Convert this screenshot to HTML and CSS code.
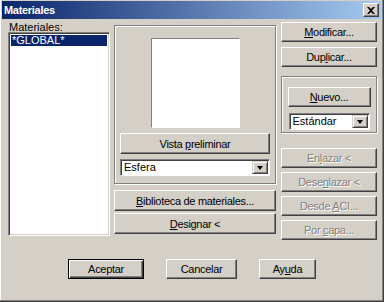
FILE: index.html
```html
<!DOCTYPE html>
<html lang="es">
<head>
  <meta charset="UTF-8">
  <title>Materiales</title>
  <link rel="stylesheet" href="styles.css">
</head>
<body>

  <div class="window">
    <div class="titlebar">
      <span class="title">Materiales</span>
      <button class="close-btn">
        <svg width="8" height="7" viewBox="0 0 8 7"><path d="M0 0h2l2 2 2-2h2L5 3.5 8 7H6L4 5 2 7H0l3-3.5z" fill="#000"/></svg>
      </button>
    </div>

    <div class="content">
      <!-- Lista de materiales -->
      <div class="col-list">
        <label class="lbl">Materiales:</label>
        <div class="listbox">
          <div class="item selected">*GLOBAL*</div>
        </div>
      </div>

      <!-- Vista previa -->
      <div class="col-mid">
        <div class="group preview-group">
          <div class="preview"></div>
          <button class="btn btn-vista">Vista <u>p</u>reliminar</button>
          <div class="combo combo-esfera">
            <span class="combo-text">Esfera</span>
            <span class="combo-arrow"></span>
          </div>
        </div>
        <button class="btn btn-wide btn-biblio"><u>B</u>iblioteca de materiales...</button>
        <button class="btn btn-wide btn-designar"><u>D</u>esignar &lt;</button>
      </div>

      <!-- Acciones -->
      <div class="col-right">
        <button class="btn btn-side btn-mod"><u>M</u>odificar...</button>
        <button class="btn btn-side btn-dup">Dup<u>l</u>icar...</button>
        <div class="group new-group">
          <button class="btn btn-nuevo"><u>N</u>uevo...</button>
          <div class="combo combo-tipo">
            <span class="combo-text">Estándar</span>
            <span class="combo-arrow"></span>
          </div>
        </div>
        <button class="btn btn-side disabled btn-enlazar">En<u>l</u>azar &lt;</button>
        <button class="btn btn-side disabled btn-gap">Dese<u>n</u>lazar &lt;</button>
        <button class="btn btn-side disabled btn-gap">Desde <u>A</u>CI...</button>
        <button class="btn btn-side disabled btn-gap">Por <u>c</u>apa...</button>
      </div>
    </div>

    <div class="footer">
      <button class="btn default btn-aceptar">Aceptar</button>
      <button class="btn btn-cancelar">Cancelar</button>
      <button class="btn btn-ayuda">Ay<u>u</u>da</button>
    </div>
  </div>

</body>
</html>
```

FILE: styles.css
```css
body {
  margin: 0;
  font-family: 'Liberation Sans', Arial, sans-serif;
  font-size: 11px;
  color: #000;
  background-color: #d4d0c8;
}

.window {
  width: 384px;
  height: 302px;
  box-sizing: border-box;
  display: flex;
  flex-direction: column;
  background-color: #d4d0c8;
  border-right: 1px solid #404040;
  border-bottom: 1px solid #404040;
  box-shadow: inset -1px -1px #808080, inset 1px 0 #fff;
  padding: 1px 2px 0 2px;
}

.titlebar {
  height: 18px;
  flex: none;
  display: flex;
  align-items: center;
  justify-content: space-between;
  background: linear-gradient(to right, #0a246a, #a6caf0);
  padding: 0 2px 0 2px;
}

.title {
  color: white;
  font-weight: bold;
  font-size: 11px;
  letter-spacing: -0.3px;
}

.close-btn {
  width: 16px;
  height: 14px;
  padding: 0;
  background-color: #d4d0c8;
  border: 1px solid;
  border-color: #fff #404040 #404040 #fff;
  box-shadow: inset -1px -1px #808080;
  display: flex;
  align-items: center;
  justify-content: center;
}

.content {
  display: flex;
  flex: none;
  height: 221px;
}

.col-list {
  width: 102px;
  margin-left: 6px;
  display: flex;
  flex-direction: column;
}

.lbl {
  margin-top: 3px;
  height: 10px;
  line-height: 10px;
  padding-left: 1px;
}

.listbox {
  height: 204px;
  flex: none;
  box-sizing: border-box;
  background: white;
  border: 1px solid;
  border-color: #808080 #fff #fff #808080;
  box-shadow: inset 1px 1px #404040, inset -1px -1px #d4d0c8;
  padding: 2px;
}

.item {
  height: 11px;
  line-height: 11px;
  padding-left: 1px;
}

.item.selected {
  background-color: #0a246a;
  color: white;
}

.col-mid {
  width: 162px;
  margin-left: 4px;
  display: flex;
  flex-direction: column;
}

.group {
  box-sizing: border-box;
  flex: none;
  border: 1px solid #808080;
  box-shadow: inset 1px 1px #fff, 1px 1px #fff;
}

.preview-group {
  margin-top: 6px;
  height: 159px;
  display: flex;
  flex-direction: column;
  align-items: center;
}

.preview {
  width: 89px;
  height: 90px;
  flex: none;
  box-sizing: border-box;
  margin-top: 12px;
  background: white;
  border: 1px solid;
  border-color: #808080 #fff #fff #808080;
}

button {
  font-family: inherit;
  font-size: 11px;
  letter-spacing: -0.3px;
  color: #000;
  padding: 0;
}

.btn {
  box-sizing: border-box;
  flex: none;
  height: 20px;
  background-color: #d4d0c8;
  border: 1px solid;
  border-color: #fff #404040 #404040 #fff;
  box-shadow: inset -1px -1px #808080;
}

.btn u {
  text-decoration: underline;
}

.btn.disabled {
  color: #808080;
  text-shadow: 1px 1px #fff;
}

.btn.default {
  border: 1px solid #000;
  box-shadow: inset 1px 1px #fff, inset -1px -1px #404040, inset -2px -2px #808080;
}

.btn-vista {
  width: 150px;
  height: 21px;
  margin-top: 5px;
}

.combo {
  box-sizing: border-box;
  flex: none;
  height: 17px;
  display: flex;
  align-items: center;
  justify-content: space-between;
  background: white;
  border: 1px solid;
  border-color: #808080 #fff #fff #808080;
  box-shadow: inset 1px 1px #404040;
  padding: 1px 1px 1px 3px;
}

.combo-esfera {
  width: 150px;
  margin-top: 5px;
}

.combo-text {
  line-height: 13px;
}

.combo-arrow {
  width: 16px;
  height: 13px;
  box-sizing: border-box;
  background-color: #d4d0c8;
  border: 1px solid;
  border-color: #d4d0c8 #404040 #404040 #d4d0c8;
  box-shadow: inset 1px 1px #fff, inset -1px -1px #808080;
  position: relative;
}

.combo-arrow::after {
  content: "";
  position: absolute;
  left: 4px;
  top: 4px;
  border-left: 3.5px solid transparent;
  border-right: 3.5px solid transparent;
  border-top: 4px solid #000;
}

.btn-wide {
  width: 162px;
  height: 21px;
}

.btn-biblio {
  margin-top: 6px;
}

.btn-designar {
  margin-top: 2px;
}

.col-right {
  width: 96px;
  margin-left: 5px;
  display: flex;
  flex-direction: column;
}

.btn-side {
  width: 96px;
}

.btn-mod {
  margin-top: 3px;
}

.btn-dup {
  margin-top: 5px;
}

.new-group {
  margin-top: 9px;
  width: 96px;
  height: 57px;
  display: flex;
  flex-direction: column;
  align-items: center;
  padding-top: 10px;
}

.btn-nuevo {
  width: 83px;
}

.combo-tipo {
  width: 81px;
  margin-top: 6px;
}

.btn-enlazar {
  margin-top: 15px;
}

.btn-gap {
  margin-top: 4px;
}

.footer {
  display: flex;
  flex: none;
  margin-top: 19px;
  padding-left: 66px;
}

.footer .btn {
  height: 20px;
}

.btn-aceptar {
  width: 76px;
}

.btn-cancelar {
  width: 71px;
  margin-left: 22px;
}

.btn-ayuda {
  width: 57px;
  margin-left: 22px;
}
```
